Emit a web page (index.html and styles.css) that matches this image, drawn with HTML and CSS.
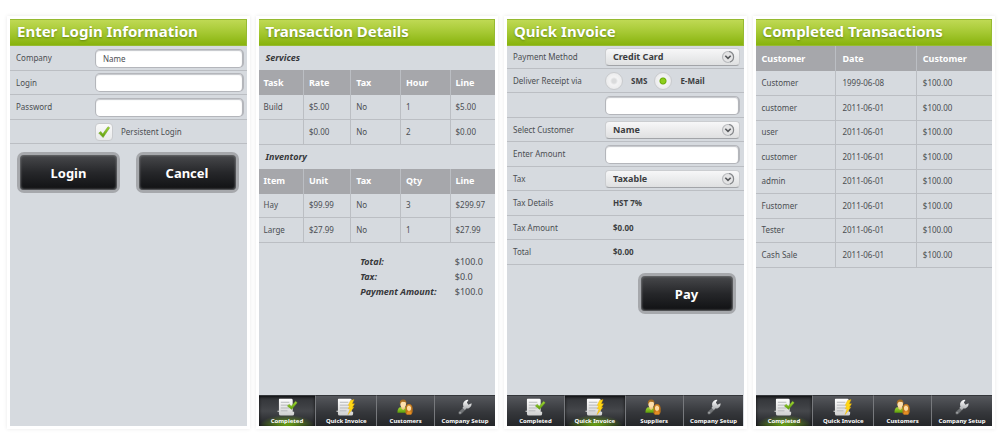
FILE: index.html
```html
<!DOCTYPE html>
<html lang="en">
<head>
<meta charset="utf-8">
<title>Mobile Invoicing</title>
<link rel="stylesheet" href="styles.css">
</head>
<body>
<svg class="sprite" aria-hidden="true">
  <defs>
    <linearGradient id="paper" x1="0" y1="0" x2="0" y2="1"><stop offset="0" stop-color="#fff"/><stop offset="1" stop-color="#cfcfcf"/></linearGradient>
    <linearGradient id="green" x1="0" y1="0" x2="0" y2="1"><stop offset="0" stop-color="#a5da35"/><stop offset="1" stop-color="#5c9c0a"/></linearGradient>
    <linearGradient id="steel" x1="0" y1="0" x2="0" y2="1"><stop offset="0" stop-color="#fff"/><stop offset="1" stop-color="#a9abae"/></linearGradient>
  </defs>
  <symbol id="sheet" viewBox="0 0 22 20">
    <path d="M2.500 1.500Q2.500 .8 3.200 .8H15.500Q17 .8 17 2.300V14.500H18.500V16.500Q18.500 18.500 16.500 18.500H4.500Q2.500 18.500 2.500 16.500V14.500H1V13.500H2.500Z" fill="url(#paper)"/>
    <path d="M4.500 4.500h9M4.500 7.500h9M4.500 10.500h9M4.500 13.500h7" stroke="#b4b6b8" stroke-width="1"/>
  </symbol>
  <symbol id="completed" viewBox="0 0 22 20">
    <use href="#sheet"/>
    <path d="M11.300 8.300L13.500 6.500L15.500 8.600L20 3.300L21.800 5L15.800 12Z" fill="url(#green)" stroke="#6aa325" stroke-width=".4"/>
  </symbol>
  <symbol id="invoice" viewBox="0 0 22 20">
    <use href="#sheet"/>
    <path d="M15.800 2.500L19.500 1.700L17.600 6H20L17.800 9.700H19.300L13.200 17.500L15.300 11.300H13.300L15 7.800H13.300Z" fill="#ffd814" stroke="#e5a400" stroke-width=".4"/>
  </symbol>
  <symbol id="people" viewBox="0 0 22 20">
    <path d="M2 15.500Q2 9.700 5.500 9.700H10Q13.500 9.700 13.500 15.500Z" fill="url(#green)"/>
    <path d="M6 8.500H10L9.800 11L8 12.500L6.200 11Z" fill="#f1c98d"/>
    <ellipse cx="8" cy="6.200" rx="3" ry="3.900" fill="#ffe0ab"/>
    <path d="M4.500 6.500Q4 1.500 8.100 1.500Q12 1.500 11.500 6.500L10.500 4.300L6.700 4Z" fill="#a66c20"/>
    <path d="M10.500 16V11Q10.800 6.300 14.200 6.300Q17.600 6.500 18 11V14.500Q18 16.500 16 17.300H12Z" fill="#bb731b"/>
    <ellipse cx="14.200" cy="10.600" rx="2.200" ry="3" fill="#ffdca2"/>
    <path d="M11.600 17.300Q12 13.600 14.200 13.500Q16.800 13.600 16.800 17.300Z" fill="#e58d24"/>
    <path d="M11.900 9.500L14 7.500L16.600 9.700L16 7.300L12.800 7Z" fill="#d28d30"/>
  </symbol>
  <symbol id="wrench" viewBox="0 0 22 20">
    <path d="M10.500 8.600L13.200 11L7 17Q5.600 18 4.300 16.900Q3.200 15.600 4.300 14.400Z" fill="#717477" stroke="#303235" stroke-width=".5"/>
    <circle cx="5.800" cy="15.600" r=".7" fill="#d8d9db"/>
    <path d="M9.400 9.300Q8 5.300 11 3Q12.800 1.700 14.600 2L13 4.800L14.600 7L17.900 5.600Q18.100 9.400 15 10.700Q13.700 11.200 12.600 10.800L10.800 12.500L8.300 10.200Z" fill="url(#steel)"/>
  </symbol>
  <symbol id="arrow" viewBox="0 0 14 14">
    <circle cx="7" cy="7" r="5.500" fill="#e4e4e5" stroke="#b8babd" stroke-width="1.200"/>
    <path d="M8 1.500A5.500 5.500 0 0 1 9 12.100" fill="none" stroke="#85878a" stroke-width="1.100"/>
    <path d="M4.300 5.700L7 8.400L9.700 5.700" fill="none" stroke="#56585b" stroke-width="1.600"/>
  </symbol>
  <symbol id="tick" viewBox="0 0 14 14">
    <path d="M1.700 8L3.900 6.500L5.700 9L11 1.700L12.700 2.800L6.100 12.600Z" fill="url(#green)" stroke="#6a9c2c" stroke-width=".5"/>
  </symbol>
</svg>

<main class="screens">
  <section class="screen">
    <h1 class="title">Enter Login Information</h1>
    <form class="form">
      <div class="row"><label for="company">Company</label><input class="text" id="company" type="text" value="Name"></div>
      <div class="row"><label for="login">Login</label><input class="text" id="login" type="text"></div>
      <div class="row"><label for="password">Password</label><input class="text" id="password" type="password"></div>
      <div class="row"><span></span>
        <label class="choice"><span class="check"><input type="checkbox" checked><svg><use href="#tick"/></svg></span>Persistent Login</label>
      </div>
      <div class="actions">
        <button class="button" type="button">Login</button>
        <button class="button" type="button">Cancel</button>
      </div>
    </form>
  </section>

  <section class="screen">
    <h1 class="title">Transaction Details</h1>
    <h2 class="subtitle">Services</h2>
    <table class="table lines">
      <thead><tr><th>Task</th><th>Rate</th><th>Tax</th><th>Hour</th><th>Line</th></tr></thead>
      <tbody>
        <tr><td>Build</td><td>$5.00</td><td>No</td><td>1</td><td>$5.00</td></tr>
        <tr><td></td><td>$0.00</td><td>No</td><td>2</td><td>$0.00</td></tr>
      </tbody>
    </table>
    <h2 class="subtitle">Inventory</h2>
    <table class="table lines">
      <thead><tr><th>Item</th><th>Unit</th><th>Tax</th><th>Qty</th><th>Line</th></tr></thead>
      <tbody>
        <tr><td>Hay</td><td>$99.99</td><td>No</td><td>3</td><td>$299.97</td></tr>
        <tr><td>Large</td><td>$27.99</td><td>No</td><td>1</td><td>$27.99</td></tr>
      </tbody>
    </table>
    <dl class="totals">
      <dt>Total:</dt><dd>$100.0</dd>
      <dt>Tax:</dt><dd>$0.0</dd>
      <dt>Payment Amount:</dt><dd>$100.0</dd>
    </dl>
    <nav class="tabs">
      <a class="tab active" href="#completed"><svg><use href="#completed"/></svg>Completed</a>
      <a class="tab" href="#invoice"><svg><use href="#invoice"/></svg>Quick Invoice</a>
      <a class="tab" href="#people"><svg><use href="#people"/></svg>Customers</a>
      <a class="tab" href="#wrench"><svg><use href="#wrench"/></svg>Company Setup</a>
    </nav>
  </section>

  <section class="screen">
    <h1 class="title">Quick Invoice</h1>
    <form class="form invoice">
      <div class="row"><label for="method">Payment Method</label><span class="select"><select id="method"><option>Credit Card</option></select><svg><use href="#arrow"/></svg></span></div>
      <div class="row"><span>Deliver Receipt via</span>
        <span class="radios">
          <label class="choice"><input type="radio" name="via">SMS</label>
          <label class="choice"><input type="radio" name="via" checked>E-Mail</label>
        </span>
      </div>
      <div class="row"><span></span><input class="text" type="text" aria-label="Receipt address"></div>
      <div class="row"><label for="customer">Select Customer</label><span class="select"><select id="customer"><option>Name</option></select><svg><use href="#arrow"/></svg></span></div>
      <div class="row"><label for="amount">Enter Amount</label><input class="text" id="amount" type="text"></div>
      <div class="row"><label for="tax">Tax</label><span class="select"><select id="tax"><option>Taxable</option></select><svg><use href="#arrow"/></svg></span></div>
      <div class="row"><span>Tax Details</span><output class="value">HST 7%</output></div>
      <div class="row"><span>Tax Amount</span><output class="value">$0.00</output></div>
      <div class="row"><span>Total</span><output class="value">$0.00</output></div>
      <div class="actions"><button class="button" type="button">Pay</button></div>
    </form>
    <nav class="tabs">
      <a class="tab" href="#completed"><svg><use href="#completed"/></svg>Completed</a>
      <a class="tab active" href="#invoice"><svg><use href="#invoice"/></svg>Quick Invoice</a>
      <a class="tab" href="#people"><svg><use href="#people"/></svg>Suppliers</a>
      <a class="tab" href="#wrench"><svg><use href="#wrench"/></svg>Company Setup</a>
    </nav>
  </section>

  <section class="screen">
    <h1 class="title">Completed Transactions</h1>
    <table class="table history">
      <thead><tr><th>Customer</th><th>Date</th><th>Customer</th></tr></thead>
      <tbody>
        <tr><td>Customer</td><td>1999-06-08</td><td>$100.00</td></tr>
        <tr><td>customer</td><td>2011-06-01</td><td>$100.00</td></tr>
        <tr><td>user</td><td>2011-06-01</td><td>$100.00</td></tr>
        <tr><td>customer</td><td>2011-06-01</td><td>$100.00</td></tr>
        <tr><td>admin</td><td>2011-06-01</td><td>$100.00</td></tr>
        <tr><td>Fustomer</td><td>2011-06-01</td><td>$100.00</td></tr>
        <tr><td>Tester</td><td>2011-06-01</td><td>$100.00</td></tr>
        <tr><td>Cash Sale</td><td>2011-06-01</td><td>$100.00</td></tr>
      </tbody>
    </table>
    <nav class="tabs">
      <a class="tab active" href="#completed"><svg><use href="#completed"/></svg>Completed</a>
      <a class="tab" href="#invoice"><svg><use href="#invoice"/></svg>Quick Invoice</a>
      <a class="tab" href="#people"><svg><use href="#people"/></svg>Customers</a>
      <a class="tab" href="#wrench"><svg><use href="#wrench"/></svg>Company Setup</a>
    </nav>
  </section>
</main>
</body>
</html>
```
FILE: styles.css
```css
* { box-sizing: border-box; }

body {
  margin: 0;
  background: #fff;
  color: #4b4e52;
  font: 8px/12px "Noto Sans", "Open Sans", sans-serif;
}

input, select, button { font: inherit; color: inherit; margin: 0; }

.sprite { position: absolute; width: 0; height: 0; }

.screens {
  display: grid;
  grid-template-columns: repeat(4, minmax(0, 1fr));
  gap: 12px;
  min-height: 100vh;
  padding: 19px 8px 18px 10px;
}

.screen {
  display: flex;
  flex-direction: column;
  background: #d6dadf;
  box-shadow: 0 0 0 3px #fff, 0 0 4px 3px rgba(0, 0, 0, .09);
}

.title {
  margin: 0;
  padding: 0 7px;
  height: 27px;
  line-height: 23px;
  font-size: 15px;
  font-weight: 700;
  white-space: nowrap;
  color: #fff;
  text-shadow: 0 1px 2px rgba(50, 80, 0, .5);
  background: linear-gradient(#bfd954, #a5c832 50%, #88b30d);
  border: 1px solid #96ba31;
  border-width: 1px 1px 1px 0;
}

/* Forms */
.row {
  display: grid;
  grid-template-columns: 79px minmax(0, 1fr);
  align-items: center;
  height: 24px;
  padding: 0 3px 0 6px;
  border-bottom: 1px solid #bbbec3;
}
.row:nth-child(odd) { height: 25px; }
.invoice .row { grid-template-columns: 92px minmax(0, 1fr); padding-right: 4px; }
.invoice .row:first-child { height: 23px; }

.text {
  width: 100%;
  height: 19px;
  padding: 0 7px;
  background: #fff;
  border: 1px solid #b4b6bb;
  border-right-width: 2px;
  border-radius: 5px;
  box-shadow: inset 0 1px 1px #c4c6ca;
}

.select { position: relative; display: block; }
.select select {
  display: block;
  width: 100%;
  height: 18px;
  padding: 0 20px 0 7px;
  appearance: none;
  font-size: 9px;
  font-weight: 700;
  color: #3c3e41;
  background: linear-gradient(#f7f7f8, #dfe0e1);
  border: 1px solid #cbcdd0;
  border-bottom-color: #a2a4a8;
  border-radius: 4px;
}
.select svg { position: absolute; top: 2px; right: 5px; width: 14px; height: 14px; pointer-events: none; }

.choice { display: flex; align-items: center; gap: 8px; }
.choice input {
  display: block;
  flex: none;
  width: 18px;
  height: 18px;
  appearance: none;
  border: 1px solid #c9cbce;
  background: linear-gradient(#fafafa, #e9eaeb);
}
.choice input[type="checkbox"] { border-radius: 4px; }
.choice input[type="radio"] { border-radius: 50%; background: radial-gradient(circle, #dadbdc 0 2px, #f3f3f4 4px, #e4e5e6); }
.choice input[type="radio"]:checked { background: radial-gradient(circle, #8dce1c 0 2px, #6cac08 3px, #f3f3f4 4px, #e4e5e6); }
.check { position: relative; }
.check svg { position: absolute; inset: 2px; width: 14px; height: 14px; pointer-events: none; }
.radios { display: flex; gap: 7px; font-weight: 700; color: #3c3e41; }
.value { padding-left: 8px; font-weight: 700; color: #3c3e41; }

.actions { display: flex; justify-content: space-between; gap: 15px; padding: 8px 8px 8px 7px; }
.invoice .actions { justify-content: flex-end; }
.button {
  flex: 0 1 103px;
  height: 41px;
  border: 3px solid #a6a8ac;
  border-radius: 7px;
  background: linear-gradient(#48494c, #26272a 50%, #101113);
  box-shadow: inset 0 0 2px 1px #66686b;
  color: #fff;
  font-size: 13px;
  font-weight: 700;
}
.invoice .button { flex-basis: 98px; }

/* Tables */
.subtitle {
  margin: 0;
  padding-left: 7px;
  height: 24px;
  line-height: 24px;
  font-size: 9px;
  font-style: italic;
  font-weight: 700;
  color: #36383b;
}

.table { width: 100%; table-layout: fixed; border-collapse: collapse; text-align: left; }
.table th, .table td { padding: 0 0 0 5px; border-left: 1px solid #bbbec3; }
.table th:first-child, .table td:first-child { border-left: 0; }
.table th { height: 25px; font-size: 9px; color: #fff; background: #a6a7ab; }
.table td { height: 24px; border-bottom: 1px solid #bbbec3; }
.table tr:nth-child(even) td { height: 25px; }
.lines th:nth-child(1) { width: 19%; }
.lines th:nth-child(2) { width: 20%; }
.lines th:nth-child(3), .lines th:nth-child(4) { width: 21%; }
.history th:nth-child(1) { width: 34%; }
.history th:nth-child(2) { width: 34%; }
.history th, .history td { padding-left: 6px; }

.totals {
  display: grid;
  grid-template-columns: 43% 40% 1fr;
  margin: 11px 0 0;
  line-height: 15px;
  font-size: 9px;
}
.totals dt { grid-column: 2; font-style: italic; font-weight: 700; color: #36383b; }
.totals dd { margin: 0; }

/* Bottom navigation */
.tabs { display: grid; grid-template-columns: 57fr 61fr 58fr 61fr; margin-top: auto; }
.tab {
  display: flex;
  flex-direction: column;
  align-items: center;
  height: 31px;
  padding-top: 2px;
  border-top: 1px solid #34363a;
  border-left: 1px solid #77797d;
  background: linear-gradient(#55575c, #35373b 55%, #242629);
  color: #fff;
  font-size: 6px;
  font-weight: 700;
  line-height: 8px;
  text-decoration: none;
  white-space: nowrap;
}
.tab:first-child { border-left: 0; }
.tab svg { width: 22px; height: 19px; flex: none; }
.tab.active {
  background: radial-gradient(ellipse 28px 11px at 50% 100%, #74b414, transparent), linear-gradient(#303236, #45474b 50%, #202225);
  box-shadow: inset 0 1px 3px #0c0d0e;
}
```
